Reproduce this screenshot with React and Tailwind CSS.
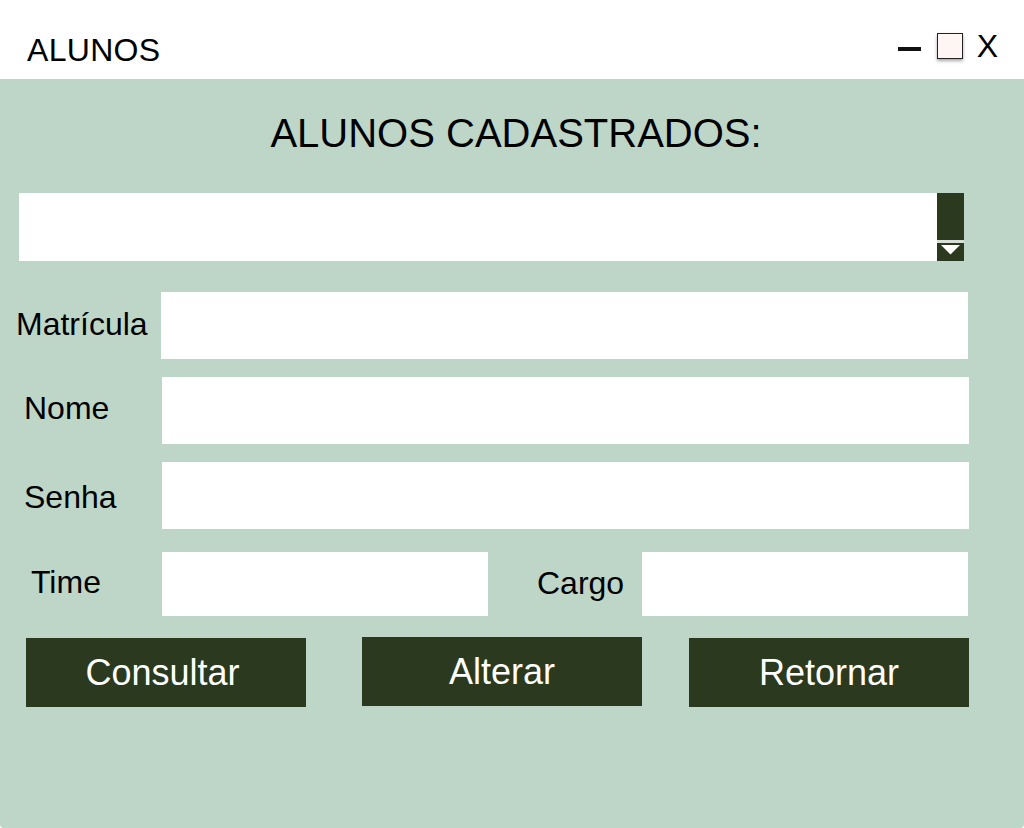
import React from 'react';

const Field = ({ label, labelPad, inputClass }) => (
  <div className="flex items-center">
    <div className={`w-[161px] text-[32px] leading-none text-black ${labelPad}`}>{label}</div>
    <div className={`bg-white ${inputClass}`} />
  </div>
);

const Button = ({ children, className = '' }) => (
  <button
    className={`w-[280px] h-[69px] bg-[#2b391f] text-white text-[36px] leading-none flex items-center justify-center ${className}`}
  >
    {children}
  </button>
);

export default function App() {
  return (
    <div className="w-[1024px] h-[828px] flex flex-col bg-white font-['Liberation_Sans',Arial,sans-serif] text-black">
      {/* title bar */}
      <div className="h-[79px] flex items-start justify-between pl-[27px] pr-[26px] pt-[34px]">
        <span className="text-[32px] leading-none tracking-[0.3px]">ALUNOS</span>
        <div className="flex items-center">
          <div className="w-[23px] h-[4px] bg-[#111] mt-[1px]" />
          <div className="ml-[16px] -mt-[5px] w-[26px] h-[26px] bg-[#fff5f5] border-[1.5px] border-[#222] shadow-[0_2px_3px_rgba(0,0,0,0.35)]" />
          <span className="ml-[14px] -mt-[4px] text-[32px] leading-none">X</span>
        </div>
      </div>

      {/* main panel */}
      <div className="flex-1 bg-[#bed6c8] rounded-b-[4px] flex flex-col">
        <h1 className="mt-[34px] text-center text-[40px] leading-none pl-[8px]">ALUNOS CADASTRADOS:</h1>

        {/* list box */}
        <div className="mt-[40px] ml-[19px] flex h-[68px]">
          <div className="w-[918px] bg-white" />
          <div className="w-[27px] flex flex-col bg-[#2b391f]">
            <div className="h-[47px]" />
            <div className="h-[3px] bg-[#d9ddd8]" />
            <div className="flex-1 flex items-start justify-center pt-[2px]">
              <svg width="19" height="10" viewBox="0 0 19 10">
                <path d="M0 0 H19 L9.5 9.5 Z" fill="#fff" />
              </svg>
            </div>
          </div>
        </div>

        <div className="mt-[31px]">
          <Field label="Matrícula" labelPad="pl-[16px] -mt-[3px]" inputClass="w-[807px] h-[67px]" />
        </div>
        <div className="mt-[18px]">
          <Field label="Nome" labelPad="pl-[24px] -mt-[5px]" inputClass="ml-[1px] w-[807px] h-[67px]" />
        </div>
        <div className="mt-[18px]">
          <Field label="Senha" labelPad="pl-[24px] mt-[2px]" inputClass="ml-[1px] w-[807px] h-[67px]" />
        </div>

        <div className="mt-[23px] flex items-center">
          <div className="w-[162px] pl-[31px] text-[32px] leading-none -mt-[4px]">Time</div>
          <div className="w-[326px] h-[64px] bg-white" />
          <div className="ml-[49px] w-[105px] text-[32px] leading-none -mt-[2px]">Cargo</div>
          <div className="w-[326px] h-[64px] bg-white" />
        </div>

        <div className="mt-[21px] flex items-start pl-[26px]">
          <Button className="mt-[1px] pr-[7px]">Consultar</Button>
          <Button className="ml-[56px] w-[279px]">Alterar</Button>
          <Button className="ml-[47px] mt-[1px]">Retornar</Button>
        </div>
      </div>
    </div>
  );
}
